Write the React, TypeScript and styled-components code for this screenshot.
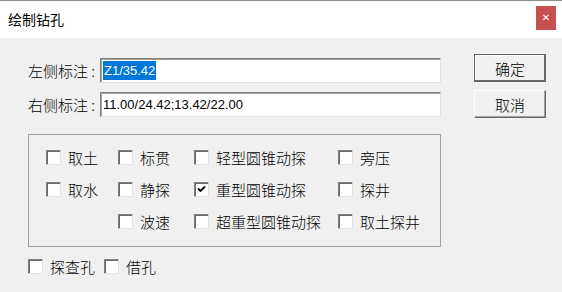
import styled, { createGlobalStyle } from 'styled-components';
import { useState } from 'react';

const GlobalStyle = createGlobalStyle`
  html, body {
    margin: 0;
    padding: 0;
    background: #f0f0f0;
  }
  body {
    font-family: "Noto Sans CJK SC", "Liberation Sans", sans-serif;
    color: #000;
  }
`;

const groupItems = [
  ['取土', '标贯', '轻型圆锥动探', '旁压'],
  ['取水', '静探', '重型圆锥动探', '探井'],
  ['', '波速', '超重型圆锥动探', '取土探井'],
];

const CheckBox = ({ label, checked, onToggle }: { label: string; checked: boolean; onToggle: () => void }) => (
  <CheckItem onClick={onToggle}>
    <Box>
      {checked && (
        <svg width="9" height="8" viewBox="0 0 9 8">
          <path d="M1 3.5 L3.5 6 L8 1.5" stroke="#000" strokeWidth="1.8" fill="none" />
        </svg>
      )}
    </Box>
    <span>{label}</span>
  </CheckItem>
);

const App = () => {
  const [checked, setChecked] = useState<Record<string, boolean>>({ '重型圆锥动探': true });
  const toggle = (k: string) => setChecked(prev => ({ ...prev, [k]: !prev[k] }));

  return (
    <>
      <GlobalStyle />
      <Dialog>
        <TitleBar>
          <Title>绘制钻孔</Title>
          <CloseButton>✕</CloseButton>
        </TitleBar>
        <Body>
          <TopRow>
            <Fields>
              <FieldRow>
                <Label>左侧标注 :</Label>
                <Input>
                  <Selected>Z1/35.42</Selected>
                </Input>
              </FieldRow>
              <FieldRow>
                <Label>右侧标注 :</Label>
                <Input>11.00/24.42;13.42/22.00</Input>
              </FieldRow>
            </Fields>
            <Buttons>
              <Button $primary>确定</Button>
              <Button>取消</Button>
            </Buttons>
          </TopRow>
          <Group>
            {groupItems.map((row, r) =>
              row.map((item, c) =>
                item ? (
                  <CheckBox key={`${r}-${c}`} label={item} checked={!!checked[item]} onToggle={() => toggle(item)} />
                ) : (
                  <span key={`${r}-${c}`} />
                )
              )
            )}
          </Group>
          <BottomRow>
            <CheckBox label="探查孔" checked={!!checked['探查孔']} onToggle={() => toggle('探查孔')} />
            <CheckBox label="借孔" checked={!!checked['借孔']} onToggle={() => toggle('借孔')} />
          </BottomRow>
        </Body>
      </Dialog>
    </>
  );
};

const Dialog = styled.div`
  width: 562px;
  height: 292px;
  display: flex;
  flex-direction: column;
  background: #f0f0f0;
  overflow: hidden;
`;

const TitleBar = styled.div`
  height: 37px;
  background: #fff;
  border-top: 1px solid #8c8c8c;
  display: flex;
  align-items: center;
  justify-content: space-between;
  padding: 0 6px 0 8px;
`;

const Title = styled.div`
  font-family: "Noto Sans CJK SC", sans-serif;
  font-size: 14px;
  line-height: 1;
  margin-top: -2px;
`;

const CloseButton = styled.div`
  width: 20px;
  height: 24px;
  margin-top: -4px;
  background: #c75050;
  color: #fff;
  font-family: "DejaVu Sans", sans-serif;
  font-size: 10px;
  font-weight: bold;
  display: flex;
  align-items: center;
  justify-content: center;
`;

const Body = styled.div`
  flex: 1;
  padding: 16px 0 0 28px;
  display: flex;
  flex-direction: column;
`;

const TopRow = styled.div`
  display: flex;
  gap: 33px;
`;

const Fields = styled.div`
  width: 413px;
  margin-top: 4px;
  display: flex;
  flex-direction: column;
  gap: 9px;
`;

const FieldRow = styled.div`
  display: flex;
  align-items: center;
`;

const Label = styled.div`
  width: 72px;
  font-size: 15px;
  font-weight: 300;
  line-height: 1;
  white-space: nowrap;
`;

const Input = styled.div`
  width: 341px;
  height: 25px;
  box-sizing: border-box;
  background: #fff;
  border: 1px solid;
  border-color: #828282 #e3e3e3 #e3e3e3 #828282;
  box-shadow: inset 1px 1px 0 #a0a0a0;
  padding: 2px 0 0 2px;
  font-family: "Liberation Sans", sans-serif;
  font-size: 13px;
  line-height: 19px;
  color: #000;
`;

const Selected = styled.span`
  display: inline-block;
  background: #0078d7;
  color: #fff;
  padding: 0 1px;
`;

const Buttons = styled.div`
  display: flex;
  flex-direction: column;
  gap: 8px;
`;

const Button = styled.div<{ $primary?: boolean }>`
  width: 72px;
  height: 28px;
  box-sizing: border-box;
  display: flex;
  align-items: center;
  justify-content: center;
  font-size: 15px;
  font-weight: 300;
  background: #f0f0f0;
  border: 1px solid;
  border-color: ${({ $primary }) => ($primary ? '#646464' : '#ffffff #696969 #696969 #ffffff')};
  box-shadow: ${({ $primary }) =>
    $primary ? 'inset -1px -1px 0 #696969, inset 1px 1px 0 #fff' : 'inset -1px -1px 0 #a0a0a0'};
`;

const Group = styled.div`
  width: 413px;
  height: 113px;
  box-sizing: border-box;
  margin-top: 16px;
  border: 1px solid #a0a0a0;
  padding: 6px 0 0 17px;
  display: grid;
  grid-template-columns: 72px 76px 144px 1fr;
  grid-template-rows: repeat(3, 32px);
  align-items: center;
`;

const CheckItem = styled.div`
  display: flex;
  align-items: center;
  gap: 7px;
  font-size: 15px;
  font-weight: 300;
  line-height: 1;
  white-space: nowrap;
  cursor: default;
`;

const Box = styled.div`
  width: 15px;
  height: 15px;
  box-sizing: border-box;
  background: #fff;
  border: 1px solid;
  border-color: #808080 #e3e3e3 #e3e3e3 #808080;
  box-shadow: inset 1px 1px 0 #696969;
  display: flex;
  align-items: center;
  justify-content: center;
  flex-shrink: 0;
`;

const BottomRow = styled.div`
  display: flex;
  gap: 9px;
  margin-top: 12px;
`;

export default App;
